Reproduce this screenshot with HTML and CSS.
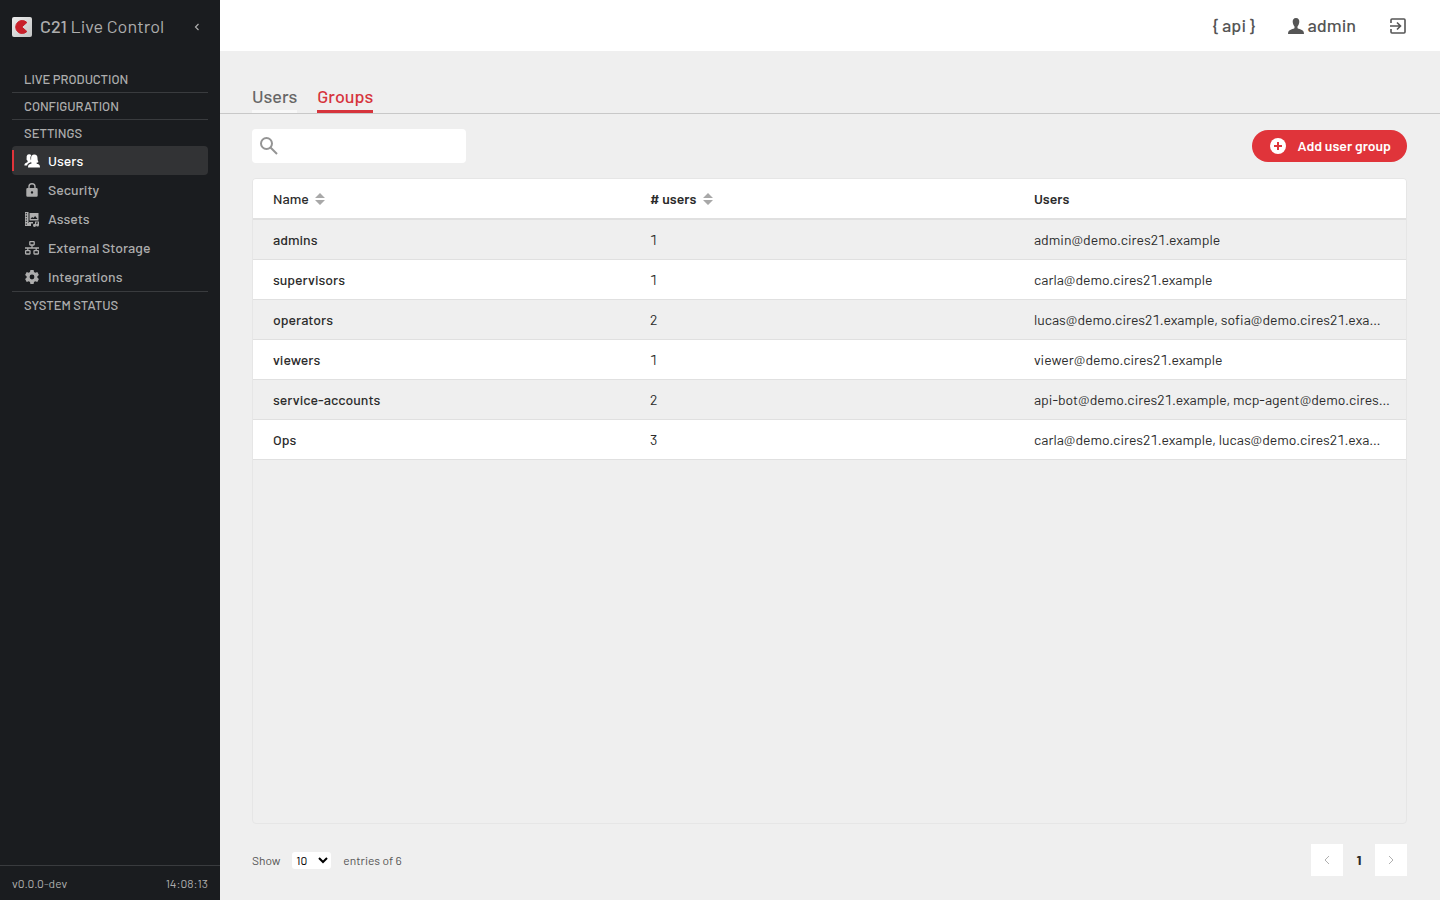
FILE: index.html
```html
<!DOCTYPE html>
<html lang="en">
<head>
  <meta charset="UTF-8">
  <meta name="viewport" content="width=device-width, initial-scale=1.0">
  <title>C21 Live Control</title>
  <link rel="stylesheet" href="styles.css">
</head>
<body>
  <aside class="sidebar">
    <div class="brand">
      <svg class="brand-logo" viewBox="0 0 20 20" aria-hidden="true">
        <defs>
          <linearGradient id="logo-bg" x1="0" y1="0" x2="1" y2="1">
            <stop offset="0" stop-color="#ececec"/>
            <stop offset="1" stop-color="#c4c4c4"/>
          </linearGradient>
        </defs>
        <rect width="20" height="20" rx="2" fill="url(#logo-bg)"/>
        <path d="M14.900 5.500A6.500 6.500 0 1 0 14.900 14.500L9.800 10z" fill="#c8202a" stroke="#c8202a" stroke-width="1" stroke-linejoin="round"/>
      </svg>
      <span class="brand-name"><b>C21</b> Live Control</span>
      <button class="collapse" type="button" aria-label="Collapse menu">
        <svg width="6" height="8" viewBox="0 0 6 8"><path d="M4.5 1L1.5 4l3 3" fill="none" stroke="currentColor" stroke-width="1.2"/></svg>
      </button>
    </div>

    <nav class="menu">
      <a class="menu-title" href="#">LIVE PRODUCTION</a>
      <a class="menu-title" href="#">CONFIGURATION</a>
      <a class="menu-title open" href="#">SETTINGS</a>
      <ul class="submenu">
        <li>
          <a class="active" href="#">
            <svg viewBox="0 0 16 16"><path d="M5.2 1.2c1 0 1.7.4 2.100 1-.8 1-1 2.200-.8 3.600.1.9.4 1.600.8 2.200-.2.9-.8 1.300-1.700 1.700-1.200.5-2.200 1.400-2.500 2.800H.4c0-1.600.6-2.300 1.800-2.800.9-.3 1.500-.6 1.500-1.300 0-.5-.4-.8-.7-1.400-.5-.1-.7-1.400-.3-1.700C2.300 2.900 3 1.200 5.200 1.200z"/><path d="M10.200 1.600c2.400 0 3.300 1.500 3.300 3.500 0 1.800.4 3 1 4-.6.6-1.400.7-2.100.6.1.8.7 1.100 1.600 1.400 1.300.5 1.900 1.100 2 3.400H4c.1-2.200.7-2.900 2-3.400 1-.4 1.700-.6 1.800-1.400-.7-.1-1.100-.4-1.400-.8.8-1.100.7-2.200.7-3.800 0-2 1-3.500 3.100-3.500z"/></svg>
            Users
          </a>
        </li>
        <li>
          <a href="#">
            <svg viewBox="0 0 16 16"><path fill-rule="evenodd" d="M4.300 6V4.700a3.700 3.700 0 0 1 7.400 0V6h.8A1.200 1.200 0 0 1 13.700 7.200v6.300a1.200 1.200 0 0 1-1.200 1.200h-9a1.200 1.200 0 0 1-1.200-1.200V7.200A1.200 1.200 0 0 1 3.500 6zm1.400 0h4.600V4.700a2.300 2.300 0 0 0-4.600 0zM8 9.200a1.200 1.200 0 1 0 0 2.400 1.200 1.200 0 0 0 0-2.400z"/></svg>
            Security
          </a>
        </li>
        <li>
          <a href="#">
            <svg viewBox="0 0 16 16"><path fill-rule="evenodd" d="M1 1h3.500v11H6v3H1zm.8 1v1.300h1V2zm0 2.600v1.300h1V4.600zm0 2.600v1.300h1V7.200zm0 2.600v1.300h1V9.800zm0 2.600v1.300h1v-1.300z"/><path fill-rule="evenodd" d="M5.500 2H14.500v7.500h-9zm1 6h7l-2.400-3-1.800 2-1.200-1z"/><path d="M11 10.500h4V14a1.500 1.500 0 1 1-1-1.400v-1h-2v2.600A1.500 1.500 0 1 1 11 13zM5 11h4v1.500H7V15H5z"/></svg>
            Assets
          </a>
        </li>
        <li>
          <a href="#">
            <svg viewBox="0 0 16 16"><g fill="none" stroke="currentColor" stroke-width="1.300"><rect x="5.800" y="1.600" width="4.400" height="3.400" rx=".5"/><rect x="1.600" y="10.600" width="4.400" height="3.400" rx=".5"/><rect x="10" y="10.600" width="4.400" height="3.400" rx=".5"/><path d="M8 5v3M1 8h14M3.800 8v2.600M12.200 8v2.600"/></g></svg>
            External Storage
          </a>
        </li>
        <li>
          <a href="#">
            <svg viewBox="0 0 16 16"><path fill-rule="evenodd" d="M6.400 1h3.200l.4 2 1.300.8 2-.7 1.600 2.800-1.500 1.400v1.400l1.500 1.400-1.600 2.800-2-.7-1.300.8-.4 2H6.400L6 13l-1.300-.8-2 .7-1.600-2.800 1.500-1.400V7.300L1.100 5.900l1.600-2.800 2 .7L6 3zM8 5.600a2.400 2.400 0 1 0 0 4.800 2.400 2.400 0 0 0 0-4.800z"/></svg>
            Integrations
          </a>
        </li>
      </ul>
      <a class="menu-title open" href="#">SYSTEM STATUS</a>
    </nav>

    <footer class="sidebar-footer">
      <span>v0.0.0-dev</span>
      <span>14:08:13</span>
    </footer>
  </aside>

  <div class="page">
    <header class="topbar">
      <a href="#"><span class="label">{ api }</span></a>
      <a href="#">
        <svg width="16" height="16" viewBox="0 0 16 16"><path d="M8 0c2.400 0 3.500 1.700 3.300 4.100C11.100 6 10.500 7.600 9.500 8.400v1.500c.3.700 1.600.9 3.300 1.500 2.300.8 3.100 1.600 3.200 4.600H0c.1-3 .9-3.800 3.200-4.600 1.700-.6 3-.8 3.300-1.500V8.400C5.500 7.600 4.900 6 4.700 4.100 4.500 1.700 5.600 0 8 0z"/></svg>
        <span class="label">admin</span>
      </a>
      <a class="logout" href="#" aria-label="Log out">
        <svg width="16" height="16" viewBox="0 0 16 16"><path d="M1 5V2a1 1 0 0 1 1-1h12a1 1 0 0 1 1 1v12a1 1 0 0 1-1 1H2a1 1 0 0 1-1-1v-3M0 8h10M7 4.500L10.500 8 7 11.500" fill="none" stroke="currentColor" stroke-width="1.600"/></svg>
      </a>
    </header>

    <nav class="tabs">
      <a href="#">Users</a>
      <a class="active" href="#">Groups</a>
    </nav>

    <main class="content">
      <div class="toolbar">
        <label class="search">
          <svg width="18" height="18" viewBox="0 0 18 18"><g fill="none" stroke="currentColor" stroke-width="2"><circle cx="6.500" cy="6.500" r="5.500"/><path d="M10.500 10.500l6.500 6.500"/></g></svg>
          <input type="text" aria-label="Search">
        </label>
        <button class="add-button" type="button">
          <svg width="16" height="16" viewBox="0 0 16 16"><circle cx="8" cy="8" r="8" fill="#fff"/><path d="M8 4v8M4 8h8" stroke="#e0343a" stroke-width="2"/></svg>
          <span class="label">Add user group</span>
        </button>
      </div>

      <div class="table-wrapper">
        <table>
          <thead>
            <tr>
              <th class="col-name">Name <svg class="sort" viewBox="0 0 10 12"><path d="M5 0l5 5H0zM5 12l5-5H0z"/></svg></th>
              <th class="col-count"># users <svg class="sort" viewBox="0 0 10 12"><path d="M5 0l5 5H0zM5 12l5-5H0z"/></svg></th>
              <th class="col-users">Users</th>
            </tr>
          </thead>
          <tbody>
            <tr><td>admins</td><td>1</td><td>admin@demo.cires21.example</td></tr>
            <tr><td>supervisors</td><td>1</td><td>carla@demo.cires21.example</td></tr>
            <tr><td>operators</td><td>2</td><td>lucas@demo.cires21.example, sofia@demo.cires21.example</td></tr>
            <tr><td>viewers</td><td>1</td><td>viewer@demo.cires21.example</td></tr>
            <tr><td>service-accounts</td><td>2</td><td>api-bot@demo.cires21.example, mcp-agent@demo.cires21.example</td></tr>
            <tr><td>Ops</td><td>3</td><td>carla@demo.cires21.example, lucas@demo.cires21.example</td></tr>
          </tbody>
        </table>
      </div>

      <div class="table-footer">
        <div class="entries">
          <label for="page-size">Show</label>
          <select id="page-size">
            <option>10</option>
            <option>25</option>
            <option>50</option>
          </select>
          <span>entries of 6</span>
        </div>
        <div class="pagination">
          <button type="button" aria-label="Previous page"><svg width="6" height="10" viewBox="0 0 6 10"><path d="M5 1L1 5l4 4" fill="none" stroke="currentColor"/></svg></button>
          <span class="current">1</span>
          <button type="button" aria-label="Next page"><svg width="6" height="10" viewBox="0 0 6 10"><path d="M1 1l4 4-4 4" fill="none" stroke="currentColor"/></svg></button>
        </div>
      </div>
    </main>
  </div>
</body>
</html>
```
FILE: styles.css
```css
* {
  box-sizing: border-box;
}

body {
  font-family: Barlow, Roboto, sans-serif;
  font-size: 14px;
  color: #2b2b2b;
  background-color: #efefef;
  margin: 0;
  display: flex;
  min-height: 100vh;
}

a {
  color: inherit;
  text-decoration: none;
}

button,
input,
select {
  font-family: inherit;
  border: none;
}

button {
  cursor: pointer;
}

svg {
  fill: currentColor;
  flex-shrink: 0;
}

.label {
  padding-bottom: 2px;
}

/* Sidebar */
.sidebar {
  width: 220px;
  flex-shrink: 0;
  display: flex;
  flex-direction: column;
  background-color: #1a1c1f;
  color: #adadad;
}

.brand {
  display: flex;
  align-items: center;
  gap: 8px;
  height: 54px;
  padding: 0 16px 0 12px;
}

.brand-logo {
  width: 20px;
  height: 20px;
}

.brand-name {
  flex: 1;
  padding-bottom: 2px;
  font-size: 18px;
}

.brand-name b {
  font-weight: 500;
}

.collapse {
  display: flex;
  padding: 4px;
  background: none;
  color: inherit;
}

.menu {
  flex: 1;
  padding: 12px 12px 0;
}

.menu-title {
  display: block;
  padding-left: 12px;
  border-bottom: 1px solid #393b3e;
  font-size: 13px;
  font-weight: 500;
  line-height: 26px;
}

.menu-title.open {
  border-bottom: none;
}

.submenu {
  list-style: none;
  margin: 0;
  padding: 0;
  border-bottom: 1px solid #393b3e;
}

.submenu a {
  display: flex;
  align-items: center;
  gap: 8px;
  height: 29px;
  padding-left: 12px;
  border-radius: 4px;
  font-weight: 500;
}

.submenu svg {
  width: 16px;
  height: 16px;
}

.submenu .active {
  background: linear-gradient(#e0343a, #e0343a) left center / 2px 21px no-repeat #323335;
  color: #fff;
}

.sidebar-footer {
  display: flex;
  justify-content: space-between;
  align-items: center;
  height: 35px;
  padding: 0 12px;
  border-top: 1px solid #393b3e;
  font-size: 12px;
}

/* Page */
.page {
  flex: 1;
  min-width: 0;
  display: flex;
  flex-direction: column;
}

.topbar {
  display: flex;
  justify-content: flex-end;
  align-items: center;
  gap: 32px;
  height: 51px;
  padding: 0 34px;
  background-color: #fff;
  color: #555;
  font-size: 18px;
  font-weight: 500;
}

.topbar a {
  display: flex;
  align-items: center;
  gap: 4px;
}

.topbar .logout {
  padding-left: 2px;
}

.tabs {
  display: flex;
  align-items: flex-end;
  gap: 20px;
  height: 63px;
  padding: 0 32px;
  border-bottom: 1px solid #c8c8c8;
  color: #666;
  font-size: 18px;
  font-weight: 500;
}

.tabs a {
  height: 30px;
  border-bottom: 3px solid #f8f8f8;
  line-height: 26px;
}

.tabs .active {
  border-color: #d6343c;
  color: #d6343c;
}

.content {
  flex: 1;
  display: flex;
  flex-direction: column;
  padding: 15px 33px 24px 32px;
}

.toolbar {
  display: flex;
  justify-content: space-between;
  align-items: center;
  height: 34px;
  margin-bottom: 15px;
}

.search {
  display: flex;
  align-items: center;
  width: 214px;
  height: 34px;
  padding: 0 8px;
  border-radius: 4px;
  background-color: #fff;
  color: #949494;
}

.search input {
  flex: 1;
  min-width: 0;
  height: 30px;
  background: none;
  outline: none;
}

.add-button {
  display: flex;
  align-items: center;
  gap: 12px;
  height: 32px;
  padding: 0 16px 0 18px;
  border-radius: 16px;
  background-color: #e0343a;
  color: #fff;
  font-size: 14px;
  font-weight: 600;
}

/* Table */
.table-wrapper {
  flex: 1;
  border: 1px solid #e6e6e6;
  border-radius: 4px;
  overflow: hidden;
}

table {
  width: 100%;
  table-layout: fixed;
  border-collapse: separate;
  border-spacing: 0;
  font-variant-numeric: tabular-nums;
}

th,
td {
  height: 40px;
  padding: 0 16px 0 20px;
  border-bottom: 1px solid #e0e0e0;
  text-align: left;
  white-space: nowrap;
  overflow: hidden;
  text-overflow: ellipsis;
}

th {
  height: 41px;
  border-bottom-width: 2px;
  background-color: #fff;
  font-weight: 600;
}

.col-name {
  width: 32.7%;
  font-weight: 500;
}

.col-count {
  width: 33.3%;
}

.sort {
  width: 10px;
  height: 12px;
  margin: -2px 0 0 4px;
  color: #a8a8a8;
  vertical-align: middle;
}

tbody tr:nth-child(even) {
  background-color: #fff;
}

td:first-child {
  font-weight: 500;
}

/* Footer */
.table-footer {
  display: flex;
  justify-content: space-between;
  align-items: center;
  height: 32px;
  margin-top: 20px;
}

.entries {
  display: flex;
  align-items: center;
  gap: 12px;
  color: #555;
  font-size: 12px;
}

.entries select {
  width: 39px;
  height: 17px;
  padding: 0;
  border-radius: 3px;
  background-color: #fff;
  color: #000;
  font-size: 12px;
}

.pagination {
  display: flex;
  align-items: center;
}

.pagination button,
.pagination .current {
  display: flex;
  justify-content: center;
  align-items: center;
  width: 32px;
  height: 32px;
}

.pagination button {
  padding: 0;
  background-color: #fff;
  color: #b0b0b0;
}

.pagination .current {
  padding-bottom: 2px;
  font-weight: 700;
}
```
